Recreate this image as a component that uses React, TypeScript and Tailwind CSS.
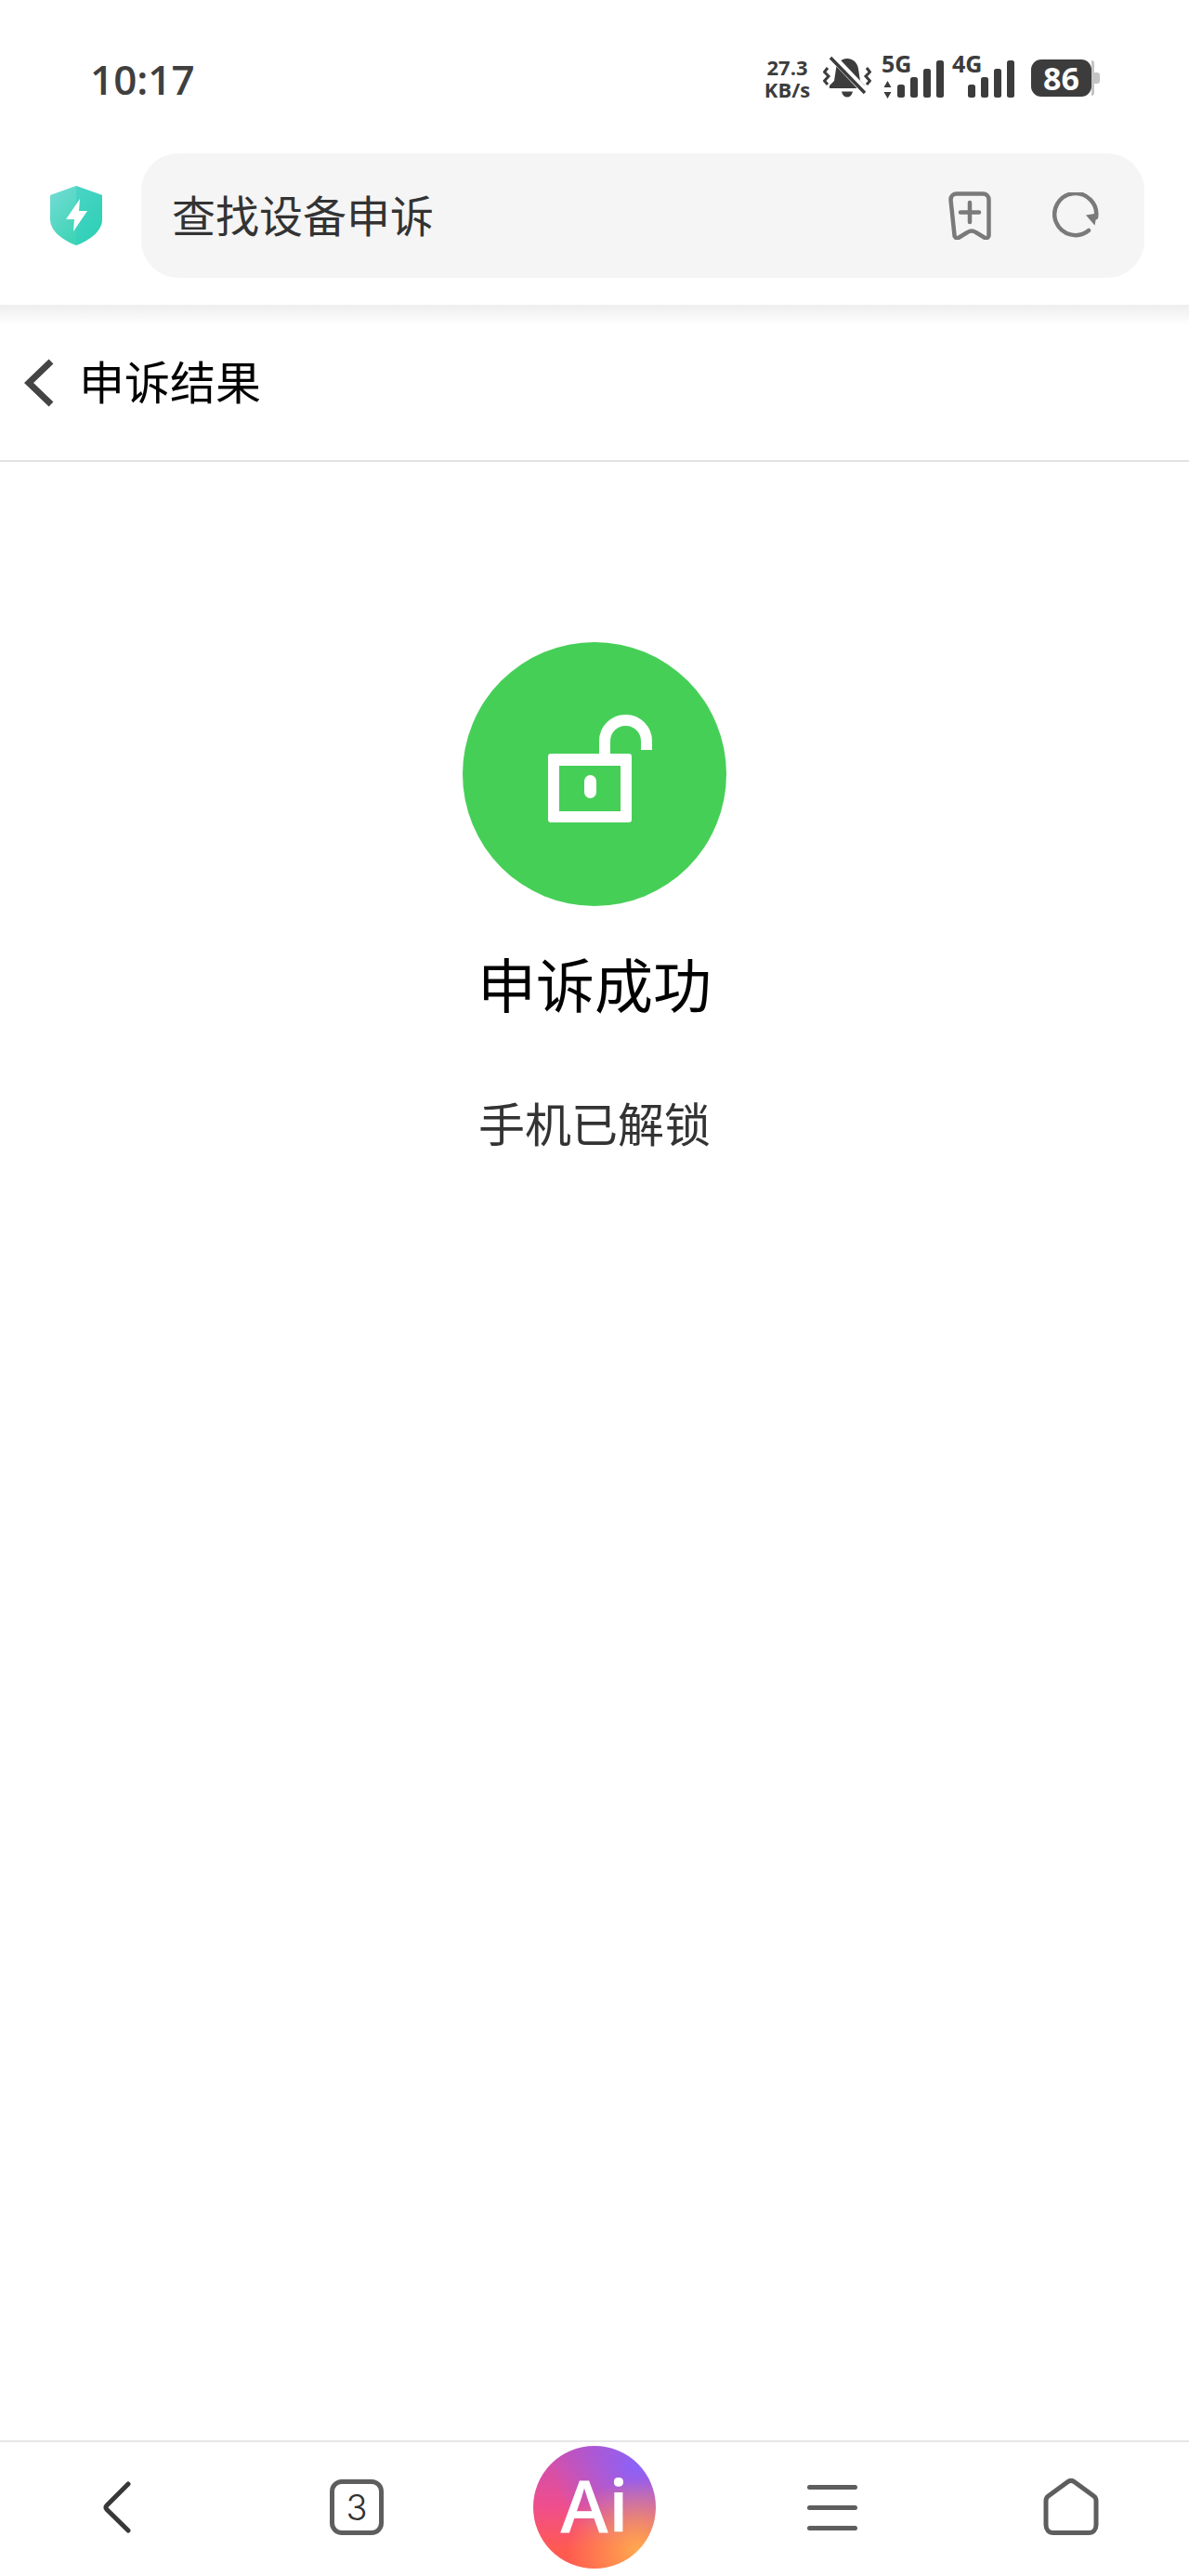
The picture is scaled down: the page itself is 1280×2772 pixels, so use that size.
const cjk = "font-['Noto_Sans_CJK_SC','Noto_Sans',sans-serif]";

const Bars: React.FC<{ label: string; arrows?: boolean }> = ({ label, arrows }) => {
  return (
    <svg width="68" height="46" viewBox="0 0 68 46" className="block overflow-visible">
      <text x="0" y="18" fontSize="25" fontWeight="700" fontFamily="'Open Sans',sans-serif" fill="#3c3c3c">
        {label}
      </text>
      {arrows && <path d="M6.500 27l4 7h-8zM6.500 46l4-7h-8z" fill="#3c3c3c" />}
      <rect x="17" y="31" width="8" height="14" rx="2.500" fill="#3c3c3c" />
      <rect x="31" y="23" width="8" height="22" rx="2.500" fill="#3c3c3c" />
      <rect x="45" y="14" width="8" height="31" rx="2.500" fill="#3c3c3c" />
      <rect x="59" y="5" width="8" height="40" rx="2.500" fill="#3c3c3c" />
    </svg>
  );
};

const MuteBell: React.FC = () => {
  return (
    <svg width="52" height="46" viewBox="0 0 52 46" className="block">
      <path d="M26 3c-7 0-11 5-12 11l-2 13-5 5v3h38v-3l-5-5-2-13C37 8 33 3 26 3z" fill="#3c3c3c" />
      <path d="M20 38.500h12c-1 4-3 6-6 6s-5-2-6-6z" fill="#3c3c3c" />
      <path d="M9 0l36 38" stroke="#fff" strokeWidth="8" />
      <path d="M8 2l37 38" stroke="#3c3c3c" strokeWidth="3.500" />
      <path d="M5 13l-3.500 4.500L6 22l-4.500 5L5 31M47 13l3.500 4.500L46 22l4.500 5L47 31" fill="none" stroke="#3c3c3c" strokeWidth="3" />
    </svg>
  );
};

const Battery: React.FC = () => {
  return (
    <div className="flex items-center">
      <div className="w-[65px] h-[40px] rounded-[11px] bg-[#3c3c3c] flex items-center justify-center">
        <span className="text-white font-['Open_Sans',sans-serif] font-bold text-[34px] leading-none">86</span>
      </div>
      <div className="w-[3px] h-[38px] bg-[#c4c4c4] rounded-r-[3px]"></div>
      <div className="w-[6px] h-[12px] bg-[#c4c4c4] rounded-r-[3px]"></div>
    </div>
  );
};

const StatusBar: React.FC = () => {
  return (
    <div className="h-[165px] flex items-start justify-between pl-[97px] pr-[96px]">
      <span className="mt-[58px] text-[#3f3f3f] text-[44px] leading-[54px] font-semibold font-['Open_Sans',sans-serif]">10:17</span>
      <div className="mt-[60px] flex items-start">
        <div className="w-[55px] ml-[-2px] mr-[2px] flex flex-col items-center font-['Open_Sans',sans-serif] font-bold text-[#3c3c3c] text-[22px]">
          <span className="leading-[24px]">27.3</span>
          <span className="leading-[24px]">KB/s</span>
        </div>
        <div className="ml-[9px]"><MuteBell /></div>
        <div className="ml-[11px]"><Bars label="5G" arrows /></div>
        <div className="ml-[8px]"><Bars label="4G" /></div>
        <div className="ml-[17px] mt-[4px]"><Battery /></div>
      </div>
    </div>
  );
};

const Shield: React.FC = () => {
  return (
    <svg width="56" height="64" viewBox="0 0 56 64" className="block">
      <defs>
        <linearGradient id="sh" x1="0" y1="0" x2="1" y2="1">
          <stop offset="0" stopColor="#74dcd5" />
          <stop offset="1" stopColor="#28d0a8" />
        </linearGradient>
      </defs>
      <path d="M28 0l28 10v26c0 12-12 22-28 28C12 58 0 48 0 36V10z" fill="url(#sh)" />
      <path d="M28 0l28 10v26c0 12-12 22-28 28z" fill="#2fcfc0" opacity=".45" />
      <path d="M32 14L17 36h9l-1 13 15-22h-9z" fill="#fff" />
    </svg>
  );
};

const SearchBar: React.FC = () => {
  return (
    <div className="h-[163px] flex items-start pl-[54px] pr-[48px]">
      <div className="mt-[35px]"><Shield /></div>
      <div className="ml-[42px] flex-1 h-[134px] rounded-[40px] bg-[#f5f5f5] flex items-center pl-[33px] pr-[49px]">
        <span className={`flex-1 mt-[-5px] text-[47px] leading-[60px] text-[#333] ${cjk}`}>查找设备申诉</span>
        <svg width="46" height="52" viewBox="0 0 46 52" fill="none" stroke="#7a7a7a" strokeWidth="4.500" strokeLinecap="round" strokeLinejoin="round" className="block">
          <path d="M2.500 9c0-4 2.500-6.500 6.500-6.500h28c4 0 6.500 2.500 6.500 6.500v38c0 3-2.500 4-5 2.500l-9-5.500c-3-2-6-2-9 0l-9 5.500c-2.500 1.500-5 .5-5-2.500z" />
          <path d="M23 12v21M13 22.500h20" />
        </svg>
        <svg width="50" height="50" viewBox="0 0 50 50" fill="none" className="block ml-[66px]">
          <path d="M39 41a22.500 22.500 0 1 1 8-14" stroke="#7a7a7a" strokeWidth="4.500" strokeLinecap="round" />
          <path d="M36 24.500l12-2-2.500 13z" fill="#7a7a7a" />
        </svg>
      </div>
    </div>
  );
};

const Result: React.FC = () => {
  return (
    <div className="flex-1 flex flex-col items-center pt-[194px]">
      <div className="w-[284px] h-[284px] rounded-full bg-[#46cf57] flex items-center justify-center">
        <svg width="112" height="116" viewBox="0 0 112 116" className="block ml-[12px] mt-[-12px]">
          <path d="M0 45a3 3 0 0 1 3-3h84a3 3 0 0 1 3 3v68a3 3 0 0 1-3 3H3a3 3 0 0 1-3-3zm12 10v49h66V55z" fill="#fff" fillRule="evenodd" />
          <path d="M61 43V28.500a22.500 22.500 0 0 1 45 0V38" fill="none" stroke="#fff" strokeWidth="12" />
          <rect x="39" y="65" width="13" height="25" rx="6.500" fill="#fff" />
        </svg>
      </div>
      <div className={`mt-[46px] text-[63px] leading-[72px] text-black ${cjk}`}>申诉成功</div>
      <div className={`mt-[84px] text-[50px] leading-[60px] text-[#333] ${cjk}`}>手机已解锁</div>
    </div>
  );
};

const BottomNav: React.FC = () => {
  return (
    <div className="h-[146px] border-t-2 border-[#e6e6e8] pb-[4px] grid grid-cols-[233px_1fr_132px_1fr_233px]">
      <div className="flex items-center pl-[110px]">
        <svg width="32" height="56" viewBox="0 0 32 56" fill="none" stroke="#383838" strokeWidth="5" strokeLinecap="round" strokeLinejoin="round" className="block">
          <path d="M28 3L5 26c-1.500 1.500-1.500 3 0 4.500L28 53" />
        </svg>
      </div>
      <div className="flex items-center pl-[122px]">
        <div className="w-[58px] h-[60px] border-[5px] border-[#5e5e5e] rounded-[13px] flex items-center justify-center">
          <span className="text-[#333] text-[38px] leading-none font-['Inter',sans-serif] font-light">3</span>
        </div>
      </div>
      <div className="flex items-center">
        <div className="w-[132px] h-[132px] rounded-full flex items-center justify-center bg-[radial-gradient(circle_at_85%_85%,#ffa84f_0%,transparent_48%),radial-gradient(circle_at_85%_15%,#8a62fa_0%,transparent_58%),linear-gradient(180deg,#c650b8_0%,#f04e8c_50%,#ff5a50_85%)]">
          <span className="text-white text-[78px] leading-none font-semibold font-['Open_Sans',sans-serif] mt-[-6px]">Ai</span>
        </div>
      </div>
      <div className="flex items-center pl-[163px]">
        <div className="w-[54px] flex flex-col gap-[17px]">
          <div className="h-[5px] rounded-full bg-[#5e5e5e]"></div>
          <div className="h-[5px] rounded-full bg-[#5e5e5e]"></div>
          <div className="h-[5px] rounded-full bg-[#5e5e5e]"></div>
        </div>
      </div>
      <div className="flex items-center pl-[76px]">
        <svg width="60" height="62" viewBox="0 0 60 62" fill="none" stroke="#5e5e5e" strokeWidth="5" strokeLinejoin="round" className="block">
          <path d="M3 24c0-2 1-4 2.500-5L26 4c2.500-2 5.500-2 8 0l20.500 15c1.500 1 2.500 3 2.500 5v26c0 5-3 8.500-8 8.500H11c-5 0-8-3.500-8-8.500z" />
        </svg>
      </div>
    </div>
  );
};

export default function App() {
  return (
    <div className="w-[1280px] h-[2772px] bg-white flex flex-col overflow-hidden">
      <StatusBar />
      <SearchBar />
      <div className="h-[22px] bg-gradient-to-b from-[#eeeeee] to-white"></div>
      <div className="h-[147px] border-b-2 border-[#e2e2e2] flex items-center pb-[22px] pl-[26px]">
        <svg width="32" height="52" viewBox="0 0 32 52" fill="none" stroke="#444" strokeWidth="7" className="block">
          <path d="M29 3L5 26l24 23" />
        </svg>
        <span className={`ml-[27px] mt-[-5px] text-[49px] leading-[60px] text-black ${cjk}`}>申诉结果</span>
      </div>
      <Result />
      <BottomNav />
    </div>
  );
}
